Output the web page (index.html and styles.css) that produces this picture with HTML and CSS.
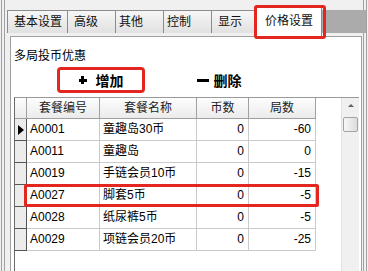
FILE: index.html
```html
<!DOCTYPE html>
<html lang="zh-CN">
<head>
    <meta charset="UTF-8">
    <meta name="viewport" content="width=device-width, initial-scale=1.0">
    <title>价格设置</title>
    <link rel="stylesheet" href="styles.css">
</head>
<body>
    <div class="window">
        <!-- Tab strip -->
        <div class="tabs">
            <div class="tab tab-wide">基本设置</div>
            <div class="tab">高级</div>
            <div class="tab tab-tight">其他</div>
            <div class="tab tab-tight">控制</div>
            <div class="tab tab-narrow">显示</div>
            <div class="tab active">价格设置</div>
        </div>

        <!-- Price settings page -->
        <div class="page">
            <div class="caption">多局投币优惠</div>
            <div class="toolbar">
                <button class="tool-btn add"><span class="icon-plus"></span>增加</button>
                <button class="tool-btn del"><span class="icon-minus"></span>删除</button>
            </div>

            <div class="grid">
                <div class="grid-body">
                    <div class="grid-row head">
                        <div class="ind"></div>
                        <div>套餐编号</div>
                        <div>套餐名称</div>
                        <div>币数</div>
                        <div>局数</div>
                    </div>
                    <div class="grid-row">
                        <div class="ind"><span class="cursor"></span></div>
                        <div>A0001</div>
                        <div>童趣岛30币</div>
                        <div class="num">0</div>
                        <div class="num">-60</div>
                    </div>
                    <div class="grid-row">
                        <div class="ind"></div>
                        <div>A0011</div>
                        <div>童趣岛</div>
                        <div class="num">0</div>
                        <div class="num">0</div>
                    </div>
                    <div class="grid-row">
                        <div class="ind"></div>
                        <div>A0019</div>
                        <div>手链会员10币</div>
                        <div class="num">0</div>
                        <div class="num">-15</div>
                    </div>
                    <div class="grid-row">
                        <div class="ind"></div>
                        <div>A0027</div>
                        <div>脚套5币</div>
                        <div class="num">0</div>
                        <div class="num">-5</div>
                    </div>
                    <div class="grid-row">
                        <div class="ind"></div>
                        <div>A0028</div>
                        <div>纸尿裤5币</div>
                        <div class="num">0</div>
                        <div class="num">-5</div>
                    </div>
                    <div class="grid-row">
                        <div class="ind"></div>
                        <div>A0029</div>
                        <div>项链会员20币</div>
                        <div class="num">0</div>
                        <div class="num">-25</div>
                    </div>
                    <!-- highlight box over row A0027 -->
                    <div class="mark"></div>
                </div>
                <div class="scrollbar">
                    <span class="arrow-up"></span>
                    <span class="thumb"></span>
                </div>
            </div>
        </div>
    </div>
</body>
</html>
```

FILE: styles.css
```css
body {
    margin: 0;
    background-color: #f0f0f0;
    font-family: "Liberation Sans", "Noto Sans CJK SC", sans-serif;
    font-size: 12px;
    color: #000;
}

.window {
    width: 368px;
    height: 271px;
    overflow: hidden;
    box-sizing: border-box;
    padding-top: 10px;
    background-image:
        linear-gradient(#a0a0a0, #a0a0a0),
        linear-gradient(#a0a0a0, #a0a0a0),
        linear-gradient(#a0a0a0, #a0a0a0),
        linear-gradient(#a0a0a0, #a0a0a0);
    background-size: 1px 100%;
    background-repeat: no-repeat;
    background-position: 1px 0, 4px 0, 363px 0, 366px 0;
}

/* tabs */
.tabs {
    display: flex;
    height: 23px;
    margin-left: 7px;
    width: 359px;
    background-color: #ababab;
}

.tab {
    box-sizing: border-box;
    width: 48px;
    height: 23px;
    padding-left: 6px;
    line-height: 23px;
    border: 1px solid #8c8c8c;
    border-right: none;
    border-bottom: none;
    background: linear-gradient(#f6f6f6, #e1e1e1);
    color: #111;
}

.tab-wide {
    width: 60px;
}

.tab-tight {
    padding-left: 3px;
}

.tab-narrow {
    width: 45px;
}

.tab.active {
    position: relative;
    z-index: 2;
    width: 66px;
    height: 31px;
    margin-top: -4px;
    padding: 0;
    text-align: center;
    line-height: 28px;
    border-right: 1px solid #8c8c8c;
    background: #fff;
}

.tab.active::after {
    content: "";
    position: absolute;
    left: -3px;
    right: -5px;
    top: -2px;
    bottom: -2px;
    border: 3px solid #e3261f;
    border-radius: 3px;
}

/* page */
.page {
    box-sizing: border-box;
    width: 352px;
    height: 240px;
    margin: 3px 0 0 10px;
    padding: 0 2px 0 3px;
    border: 1px solid #a0a0a0;
    background-color: #fff;
}

.caption {
    margin-top: 12px;
    line-height: 14px;
}

.toolbar {
    display: flex;
    margin-top: 4px;
    height: 26px;
}

.tool-btn {
    box-sizing: border-box;
    display: flex;
    align-items: center;
    justify-content: center;
    width: 88px;
    height: 26px;
    padding: 0;
    border: none;
    background: transparent;
    font-family: "Liberation Sans", "Noto Sans CJK SC", sans-serif;
    font-size: 14px;
    font-weight: bold;
    color: #000;
}

.tool-btn.add {
    margin-left: 43px;
    gap: 9px;
    border: 3px solid #e3261f;
    border-radius: 4px;
}

.tool-btn.del {
    margin-left: 30px;
    gap: 5px;
}

.icon-plus {
    width: 8px;
    height: 8px;
    background:
        linear-gradient(#000, #000) center / 8px 3px no-repeat,
        linear-gradient(#000, #000) center / 3px 8px no-repeat;
}

.icon-minus {
    width: 12px;
    height: 3px;
    background-color: #000;
}

/* grid */
.grid {
    display: flex;
    height: 180px;
    margin-top: 4px;
    border-top: 1px solid #9a9a9a;
    border-left: 1px solid #6a6a6a;
}

.grid-body {
    position: relative;
    flex: 1;
    background-color: #fff;
}

.grid-row {
    display: grid;
    grid-template-columns: 12px 73px 97px 52px 67px;
}

.grid-row > div {
    box-sizing: border-box;
    height: 22px;
    line-height: 21px;
    padding: 0 3px;
    border-right: 1px solid #cacaca;
    border-bottom: 1px solid #cacaca;
    white-space: nowrap;
}

.grid-row > .num {
    text-align: right;
    padding-right: 4px;
}

.grid-row > .ind {
    display: flex;
    align-items: center;
    justify-content: center;
    padding: 0;
    background-color: #ececec;
    border-right: 1px solid #555;
    border-bottom: 1px solid #555;
}

.grid-row.head > div {
    height: 21px;
    line-height: 20px;
    text-align: center;
    color: #222;
    background: linear-gradient(#fdfdfd, #ebebeb);
    border-right: 1px solid #a0a0a0;
    border-bottom: 1px solid #a0a0a0;
}

.cursor {
    width: 0;
    height: 0;
    border-left: 6px solid #000;
    border-top: 5px solid transparent;
    border-bottom: 5px solid transparent;
}

.mark {
    position: absolute;
    left: 9px;
    top: 86px;
    width: 295px;
    height: 23px;
    box-sizing: border-box;
    border: 3px solid #e3261f;
    border-radius: 2px;
}

.scrollbar {
    display: flex;
    flex-direction: column;
    align-items: center;
    width: 18px;
    box-sizing: border-box;
    border-left: 1px solid #e2e2e2;
    background-color: #f0f0f0;
}

.arrow-up {
    margin-top: 6px;
    width: 0;
    height: 0;
    border-bottom: 3px solid #606060;
    border-left: 3px solid transparent;
    border-right: 3px solid transparent;
}

.thumb {
    box-sizing: border-box;
    width: 15px;
    height: 15px;
    margin-top: 10px;
    border: 1px solid #a3a3a3;
    border-radius: 2px;
    background: linear-gradient(to right, #f7f7f7, #dcdcdc);
}
```
